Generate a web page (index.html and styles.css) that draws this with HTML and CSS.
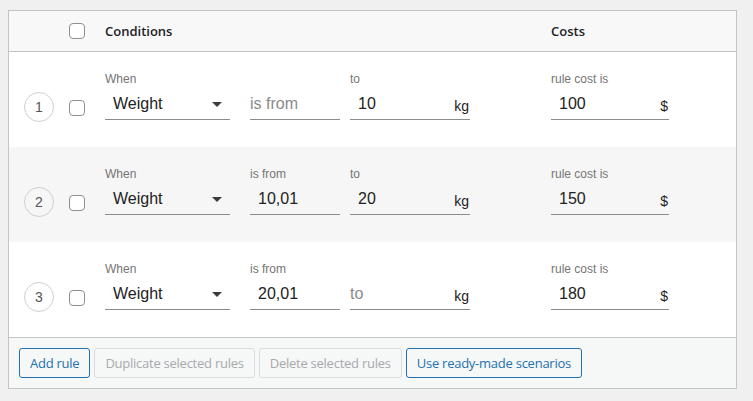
FILE: index.html
```html
<!DOCTYPE html>
<html lang="en">

<head>
  <meta charset="UTF-8">
  <meta name="viewport" content="width=device-width, initial-scale=1.0">
  <title>Shipping rules</title>
  <link rel="stylesheet" href="styles.css">
</head>

<body>

  <div class="rules">
    <div class="rules-head">
      <input class="check" type="checkbox">
      <span class="head-conditions">Conditions</span>
      <span class="head-costs">Costs</span>
    </div>

    <!-- rule 1 -->
    <div class="rule">
      <span class="rule-num">1</span>
      <input class="check" type="checkbox">
      <div class="field field-when">
        <span class="field-label">When</span>
        <div class="field-box">
          <span class="field-value">Weight</span>
          <svg class="caret" viewBox="7 10 10 5" width="10" height="5"><path d="M7 10l5 5 5-5z" /></svg>
        </div>
      </div>
      <div class="field field-from">
        <span class="field-label hidden">is from</span>
        <div class="field-box"><input class="field-input empty" placeholder="is from"></div>
      </div>
      <div class="field field-to">
        <span class="field-label">to</span>
        <div class="field-box"><input class="field-input" value="10"><span class="unit">kg</span></div>
      </div>
      <div class="field field-cost">
        <span class="field-label">rule cost is</span>
        <div class="field-box"><input class="field-input" value="100"><span class="unit">$</span></div>
      </div>
    </div>

    <!-- rule 2 -->
    <div class="rule striped">
      <span class="rule-num">2</span>
      <input class="check" type="checkbox">
      <div class="field field-when">
        <span class="field-label">When</span>
        <div class="field-box">
          <span class="field-value">Weight</span>
          <svg class="caret" viewBox="7 10 10 5" width="10" height="5"><path d="M7 10l5 5 5-5z" /></svg>
        </div>
      </div>
      <div class="field field-from">
        <span class="field-label">is from</span>
        <div class="field-box"><input class="field-input" value="10,01"></div>
      </div>
      <div class="field field-to">
        <span class="field-label">to</span>
        <div class="field-box"><input class="field-input" value="20"><span class="unit">kg</span></div>
      </div>
      <div class="field field-cost">
        <span class="field-label">rule cost is</span>
        <div class="field-box"><input class="field-input" value="150"><span class="unit">$</span></div>
      </div>
    </div>

    <!-- rule 3 -->
    <div class="rule">
      <span class="rule-num">3</span>
      <input class="check" type="checkbox">
      <div class="field field-when">
        <span class="field-label">When</span>
        <div class="field-box">
          <span class="field-value">Weight</span>
          <svg class="caret" viewBox="7 10 10 5" width="10" height="5"><path d="M7 10l5 5 5-5z" /></svg>
        </div>
      </div>
      <div class="field field-from">
        <span class="field-label">is from</span>
        <div class="field-box"><input class="field-input" value="20,01"></div>
      </div>
      <div class="field field-to">
        <span class="field-label hidden">to</span>
        <div class="field-box"><input class="field-input empty" placeholder="to"><span class="unit">kg</span></div>
      </div>
      <div class="field field-cost">
        <span class="field-label">rule cost is</span>
        <div class="field-box"><input class="field-input" value="180"><span class="unit">$</span></div>
      </div>
    </div>

    <div class="rules-foot">
      <button class="button">Add rule</button>
      <button class="button" disabled>Duplicate selected rules</button>
      <button class="button" disabled>Delete selected rules</button>
      <button class="button">Use ready-made scenarios</button>
    </div>
  </div>

</body>

</html>
```

FILE: styles.css
```css
body {
  margin: 0;
  padding: 10px 8px;
  background-color: #f0f0f1;
  font-family: 'Open Sans', sans-serif;
  color: #1d2327;
}

.rules {
  width: 729px;
  box-sizing: border-box;
  border: 1px solid #c3c4c7;
  background-color: #fff;
}

/* header */
.rules-head {
  display: flex;
  align-items: center;
  height: 40px;
  padding-left: 60px;
  background-color: #f8f8f8;
  border-bottom: 1px solid #c3c4c7;
  font-size: 13px;
  font-weight: 600;
}

.head-conditions {
  width: 446px;
  margin-left: 20px;
}

.check {
  appearance: none;
  width: 16px;
  height: 16px;
  margin: 0;
  border: 1px solid #8c8f94;
  border-radius: 4px;
  background-color: #fff;
  box-sizing: border-box;
}

/* rule rows */
.rule {
  display: flex;
  align-items: flex-end;
  height: 95px;
  box-sizing: border-box;
  padding: 0 0 27px 15px;
  font-family: 'Liberation Sans', Arial, sans-serif;
}

.rule.striped {
  background-color: #f6f6f6;
}

.rule-num {
  width: 30px;
  height: 30px;
  box-sizing: border-box;
  margin-bottom: -2px;
  border: 1px solid #cfcfcf;
  border-radius: 50%;
  display: flex;
  align-items: center;
  justify-content: center;
  font-size: 14px;
  color: #555;
}

.rule .check {
  margin: 0 20px 4px 15px;
}

.field {
  display: flex;
  flex-direction: column;
}

.field-when {
  width: 125px;
  margin-right: 20px;
}

.field-from {
  width: 90px;
  margin-right: 10px;
}

.field-to {
  width: 120px;
  margin-right: 81px;
}

.field-cost {
  width: 118px;
}

.field-label {
  font-size: 12px;
  line-height: 14px;
  margin-bottom: 3px;
  color: #757575;
}

.field-label.hidden {
  visibility: hidden;
}

.field-box {
  display: flex;
  align-items: center;
  height: 30px;
  border-bottom: 1px solid #8c8c8c;
}

.field-value,
.field-input {
  flex: 1;
  min-width: 0;
  padding: 0 0 0 8px;
  font-family: inherit;
  font-size: 16px;
  line-height: 30px;
  color: #222;
}

.field-input {
  height: 30px;
  border: none;
  background: transparent;
  outline: none;
}

.field-input.empty {
  padding-left: 0;
}

.field-input::placeholder {
  color: #8a8a8a;
  opacity: 1;
}

.caret {
  margin-right: 8px;
  fill: #3c3c3c;
}

.unit {
  padding: 4px 1px 0 0;
  font-size: 14px;
  color: #222;
}

/* footer */
.rules-foot {
  display: flex;
  gap: 4px;
  padding: 10px;
  background-color: #f6f7f7;
  border-top: 1px solid #c3c4c7;
}

.button {
  min-height: 30px;
  padding: 0 10px;
  font-family: 'Open Sans', sans-serif;
  font-size: 13px;
  letter-spacing: -0.25px;
  line-height: 28px;
  color: #2271b1;
  background-color: #f6f7f7;
  border: 1px solid #2271b1;
  border-radius: 3px;
  cursor: pointer;
}

.button:disabled {
  color: #a7aaad;
  border-color: #dcdcde;
  cursor: default;
}
```
